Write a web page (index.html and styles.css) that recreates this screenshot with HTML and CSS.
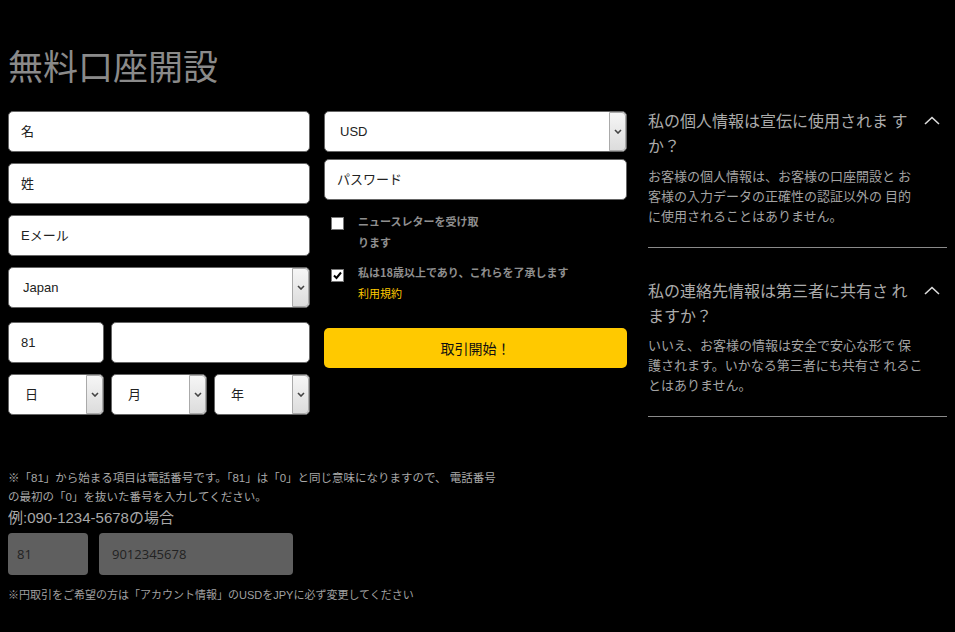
FILE: index.html
```html
<!DOCTYPE html>
<html lang="ja">
<head>
<meta charset="utf-8">
<link rel="stylesheet" href="styles.css">
</head>
<body>
    <h1 class="title">無料口座開設</h1>
    <div class="columns">
        <div class="col col-a">
            <input class="field" type="text" placeholder="名">
            <input class="field" type="text" placeholder="姓">
            <input class="field" type="email" placeholder="Eメール">
            <div class="select select-country">
                <select><option>Japan</option></select>
                <span class="arrow"><svg width="8" height="5" viewBox="0 0 8 5"><polyline points="1,1 4,4 7,1" fill="none" stroke="#444" stroke-width="1.6"/></svg></span>
            </div>
            <div class="row">
                <input class="field field-code" type="text" value="81">
                <input class="field field-phone" type="text">
            </div>
            <div class="row">
                <div class="select select-date">
                    <select class="date"><option>日</option></select>
                    <span class="arrow"><svg width="8" height="5" viewBox="0 0 8 5"><polyline points="1,1 4,4 7,1" fill="none" stroke="#444" stroke-width="1.6"/></svg></span>
                </div>
                <div class="select select-date">
                    <select class="date"><option>月</option></select>
                    <span class="arrow"><svg width="8" height="5" viewBox="0 0 8 5"><polyline points="1,1 4,4 7,1" fill="none" stroke="#444" stroke-width="1.6"/></svg></span>
                </div>
                <div class="select select-date">
                    <select class="date"><option>年</option></select>
                    <span class="arrow"><svg width="8" height="5" viewBox="0 0 8 5"><polyline points="1,1 4,4 7,1" fill="none" stroke="#444" stroke-width="1.6"/></svg></span>
                </div>
            </div>
        </div>

        <div class="col col-b">
            <div class="select select-currency">
                <select><option>USD</option></select>
                <span class="arrow"><svg width="8" height="5" viewBox="0 0 8 5"><polyline points="1,1 4,4 7,1" fill="none" stroke="#444" stroke-width="1.6"/></svg></span>
            </div>
            <input class="field field-password" type="password" placeholder="パスワード">

            <div class="check-row check-news">
                <span class="box"></span>
                <span class="check-label label-news">ニュースレターを受け取ります</span>
            </div>
            <div class="check-row check-terms">
                <span class="box"><svg width="11" height="11" viewBox="0 0 11 11"><polyline points="2,5.5 4.5,8 9,2.5" fill="none" stroke="#000" stroke-width="2"/></svg></span>
                <span class="check-label">私は18歳以上であり、これらを了承します<br><span class="terms">利用規約</span></span>
            </div>

            <div class="start-button">取引開始！</div>
        </div>

        <div class="col col-c">
            <div class="faq">
                <div class="faq-head">
                    <span class="faq-question">私の個人情報は宣伝に使用されま す<br>か？</span>
                    <svg class="chevron" width="16" height="9" viewBox="0 0 16 9"><polyline points="1,8 8,1.5 15,8" fill="none" stroke="#ddd" stroke-width="1.6"/></svg>
                </div>
                <p class="faq-answer">お客様の個人情報は、お客様の口座開設と お<br>客様の入力データの正確性の認証以外の 目的<br>に使用されることはありません。</p>
            </div>
            <div class="faq">
                <div class="faq-head">
                    <span class="faq-question">私の連絡先情報は第三者に共有さ れ<br>ますか？</span>
                    <svg class="chevron" width="16" height="9" viewBox="0 0 16 9"><polyline points="1,8 8,1.5 15,8" fill="none" stroke="#ddd" stroke-width="1.6"/></svg>
                </div>
                <p class="faq-answer">いいえ、お客様の情報は安全で安心な形で 保<br>護されます。いかなる第三者にも共有さ れるこ<br>とはありません。</p>
            </div>
        </div>
    </div>

    <div class="notes">
        <p class="note">※「81」から始まる項目は電話番号です。「81」は「0」と同じ意味になりますので、 電話番号<br>の最初の「0」を抜いた番号を入力してください。</p>
        <p class="example">例:090-1234-5678の場合</p>
        <div class="sample">
            <div class="sample-box sample-code">81</div>
            <div class="sample-box sample-phone">9012345678</div>
        </div>
        <p class="note-small">※円取引をご希望の方は「アカウント情報」のUSDをJPYに必ず変更してください</p>
    </div>
</body>
</html>
```

FILE: styles.css
```css
* {
    box-sizing: border-box;
}

body {
    margin: 8px;
    background: #000;
    color: #aaa;
    font-family: "Liberation Sans", "Noto Sans CJK JP", sans-serif;
}

.title {
    margin: 37px 0 0;
    font-family: "Noto Sans CJK JP", sans-serif;
    font-size: 35px;
    line-height: 40px;
    font-weight: 400;
    color: #8a8a8a;
}

.columns {
    display: flex;
    align-items: flex-start;
    margin-top: 23px;
}

.col-a {
    width: 302px;
    padding-top: 3px;
}

.col-b {
    width: 303px;
    margin-left: 14px;
    padding-top: 3px;
}

.col-c {
    width: 299px;
    margin-left: 21px;
}

.field,
.select select {
    display: block;
    width: 100%;
    height: 41px;
    border: 1px solid #666;
    border-radius: 5px;
    background: #fff;
    padding: 0 12px;
    font-family: "Liberation Sans", "Noto Sans CJK JP", sans-serif;
    font-size: 13px;
    color: #222;
    outline: none;
}

.field {
    margin-bottom: 11px;
}

.field::placeholder {
    color: #222;
}

.select {
    position: relative;
    height: 41px;
    margin-bottom: 11px;
}

.select select {
    appearance: none;
    -webkit-appearance: none;
    padding-left: 14px;
}

.select .arrow {
    position: absolute;
    top: 1px;
    right: 1px;
    bottom: 1px;
    width: 17px;
    border: 1px solid #aaa;
    border-radius: 0 4px 4px 0;
    background: linear-gradient(#f6f6f6, #dcdcdc);
    display: flex;
    align-items: center;
    justify-content: center;
}

.select-country {
    margin-bottom: 14px;
}

.select-currency select {
    padding-left: 15px;
}

.row {
    display: flex;
    gap: 7px;
    margin-bottom: 11px;
}

.row:last-child {
    margin-bottom: 0;
}

.row .field,
.row .select {
    margin-bottom: 0;
}

.field-code {
    width: 96px;
}

.field-phone {
    flex: 1;
}

.select-date {
    flex: 1;
}

.select-date select {
    padding-left: 16px;
}

.field-password {
    margin-top: -4px;
}

.check-row {
    display: flex;
    align-items: flex-start;
    padding-left: 7px;
}

.check-news {
    margin-top: 5px;
}

.check-terms {
    margin-top: 9px;
}

.box {
    width: 13px;
    height: 13px;
    margin-top: 6px;
    border: 1px solid #777;
    background: #fff;
    display: flex;
    align-items: center;
    justify-content: center;
    flex-shrink: 0;
}

.check-terms .box {
    margin-top: 7px;
}

.check-label {
    margin-left: 14px;
    font-family: "Noto Sans CJK JP", sans-serif;
    font-size: 11px;
    font-weight: 700;
    line-height: 21px;
    color: #8f8f8f;
}

.label-news {
    width: 128px;
}

.terms {
    color: #ffc800;
    font-weight: 400;
}

.start-button {
    margin-top: 24px;
    height: 40px;
    border-radius: 5px;
    background: #ffc900;
    color: #111;
    font-family: "Noto Sans CJK JP", sans-serif;
    font-size: 14px;
    display: flex;
    align-items: center;
    justify-content: center;
    cursor: pointer;
}

.faq {
    border-bottom: 1px solid #8a8a8a;
    padding-bottom: 21px;
}

.faq + .faq {
    margin-top: 30px;
}

.faq-head {
    display: flex;
    justify-content: space-between;
    align-items: flex-start;
}

.faq-question {
    font-family: "Noto Sans CJK JP", sans-serif;
    font-size: 16px;
    line-height: 25px;
    color: #ababab;
}

.chevron {
    margin: 8px 7px 0 0;
}

.faq-answer {
    margin: 8px 0 0;
    font-family: "Noto Sans CJK JP", sans-serif;
    font-size: 13px;
    line-height: 20px;
    color: #a3a3a3;
}

.faq + .faq .faq-answer {
    margin-top: 7px;
}

.notes {
    margin-top: 52px;
}

.note {
    margin: 0;
    font-family: "Liberation Sans", "Noto Sans CJK JP", sans-serif;
    font-size: 11.5px;
    line-height: 19px;
    color: #a8a8a8;
}

.example {
    margin: 1px 0 0;
    font-size: 15px;
    line-height: 20px;
    color: #a8a8a8;
}

.sample {
    display: flex;
    gap: 11px;
    margin-top: 5px;
}

.sample-box {
    height: 42px;
    border-radius: 4px;
    background: #5f5f5f;
    color: #222;
    font-family: "Open Sans", "Noto Sans", sans-serif;
    font-size: 13px;
    display: flex;
    align-items: center;
}

.sample-code {
    width: 80px;
    padding-left: 9px;
}

.sample-phone {
    width: 194px;
    padding-left: 13px;
}

.note-small {
    margin: 12px 0 0;
    font-size: 11px;
    line-height: 16px;
    color: #a0a0a0;
}
```
